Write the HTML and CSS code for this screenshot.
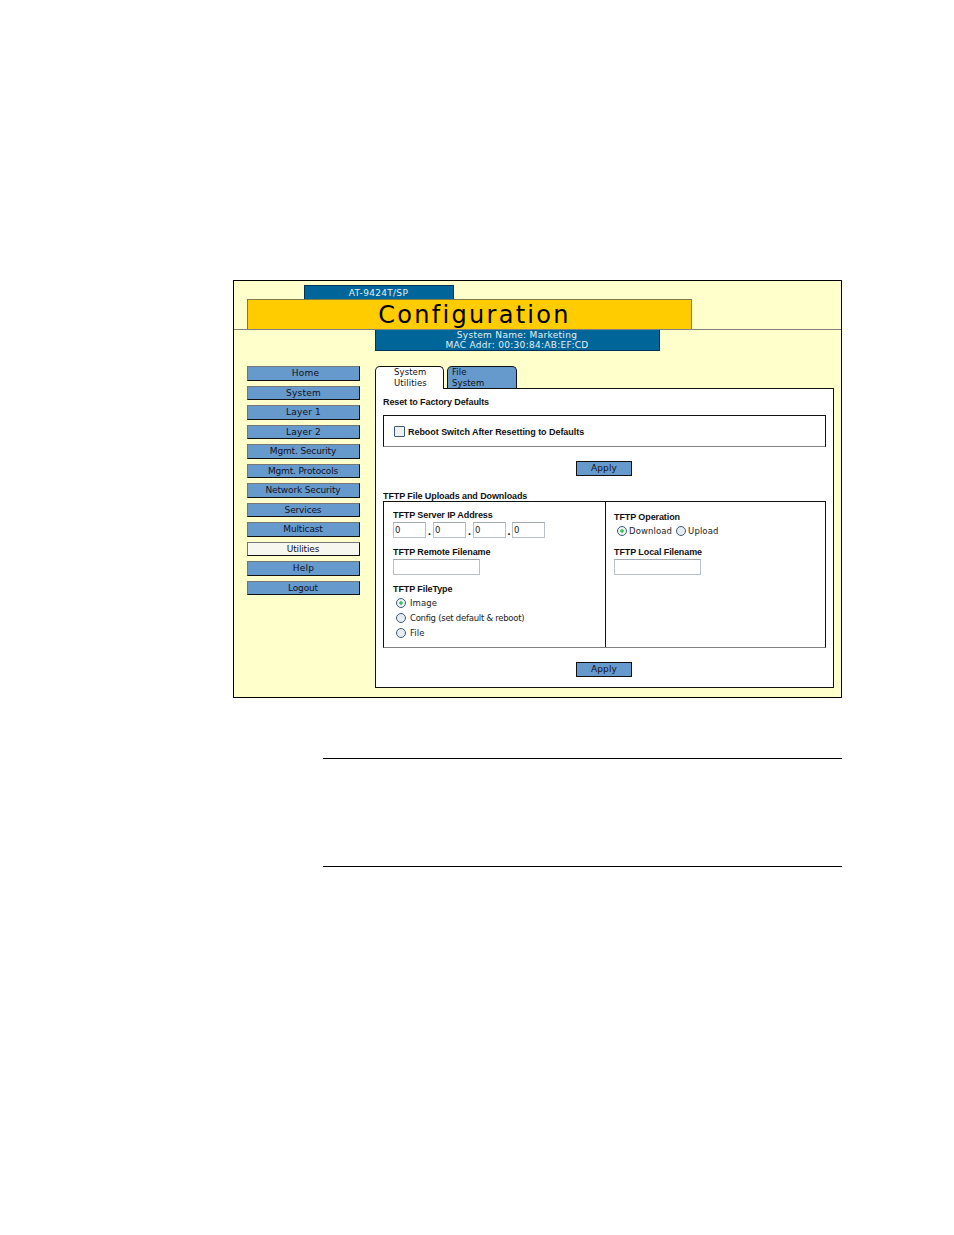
FILE: index.html
```html
<!DOCTYPE html>
<html lang="en">
<head>
<meta charset="utf-8">
<title>Configuration</title>
<link rel="stylesheet" href="styles.css">
</head>
<body>
<div class="figure">
  <div class="panel">
    <header class="head">
      <div class="model">AT-9424T/SP</div>
      <div class="title">Configuration</div>
    </header>
    <div class="sysinfo">
      <div>System Name: Marketing</div>
      <div>MAC Addr: 00:30:84:AB:EF:CD</div>
    </div>
    <div class="main">
      <nav class="side">
        <a class="nav home">Home</a>
        <a class="nav">System</a>
        <a class="nav">Layer 1</a>
        <a class="nav">Layer 2</a>
        <a class="nav long">Mgmt. Security</a>
        <a class="nav long">Mgmt. Protocols</a>
        <a class="nav long">Network Security</a>
        <a class="nav long">Services</a>
        <a class="nav long">Multicast</a>
        <a class="nav long current">Utilities</a>
        <a class="nav">Help</a>
        <a class="nav long">Logout</a>
      </nav>
      <section class="content">
        <div class="tabs">
          <div class="tab active">System<br>Utilities</div>
          <div class="tab">File<br>System</div>
        </div>
        <div class="box">
          <h2 class="sect first">Reset to Factory Defaults</h2>
          <div class="reset">
            <label class="check"><input type="checkbox">Reboot Switch After Resetting to Defaults</label>
          </div>
          <div class="actions one"><button class="apply">Apply</button></div>
          <h2 class="sect second">TFTP File Uploads and Downloads</h2>
          <div class="tftp">
            <div class="col left">
              <div class="lab l1">TFTP Server IP Address</div>
              <div class="ip">
                <input class="field ipf" value="0"><span class="dot">.</span>
                <input class="field ipf" value="0"><span class="dot">.</span>
                <input class="field ipf" value="0"><span class="dot short">.</span>
                <input class="field ipf" value="0">
              </div>
              <div class="lab l2">TFTP Remote Filename</div>
              <input class="field name">
              <div class="lab l3">TFTP FileType</div>
              <label class="opt first-opt"><input type="radio" name="ft" checked>Image</label>
              <label class="opt tight"><input type="radio" name="ft">Config (set default &amp; reboot)</label>
              <label class="opt"><input type="radio" name="ft">File</label>
            </div>
            <div class="col right">
              <div class="lab r1">TFTP Operation</div>
              <div class="ops">
                <label class="op"><input type="radio" name="op" checked>Download</label>
                <label class="op"><input type="radio" name="op">Upload</label>
              </div>
              <div class="lab r2">TFTP Local Filename</div>
              <input class="field name">
            </div>
          </div>
          <div class="actions two"><button class="apply">Apply</button></div>
        </div>
      </section>
    </div>
  </div>
  <div class="note"></div>
</div>
</body>
</html>
```
FILE: styles.css
```css
html, body { margin: 0; padding: 0; background: #fff; }
body { height: 1235px; overflow: hidden; font-family: "DejaVu Sans", sans-serif; color: #111; }
.figure { padding: 280px 0 0 233px; width: 609px; }
.panel { box-sizing: border-box; width: 609px; height: 418px; border: 1px solid #000; background: #ffffcc; }
.head { height: 44px; padding-top: 4px; border-bottom: 1px solid #808080; }
.model { box-sizing: border-box; margin-left: 70px; width: 150px; height: 14px; background: #006699; border: 1px solid #003355; border-bottom: 0; color: #e8f0f6; font-size: 9px; line-height: 14px; text-align: center; letter-spacing: .3px; padding-right: 1px; }
.title { box-sizing: border-box; margin-left: 13px; width: 445px; height: 30px; padding-left: 10px; background: #ffcc00; border: 1px solid #807a40; border-bottom: 0; font-size: 24px; line-height: 31px; text-align: center; letter-spacing: 2.3px; color: #000; font-weight: 400; }
.sysinfo { box-sizing: border-box; margin-left: 141px; width: 285px; height: 21px; background: #006699; border: 1px solid #003355; border-top: 0; color: #e8f0f6; font-size: 9px; line-height: 10px; text-align: center; letter-spacing: .3px; padding-right: 1px; }
.main { display: flex; margin-top: 15px; padding-left: 13px; }
.side { width: 113px; display: flex; flex-direction: column; }
.nav { box-sizing: border-box; display: block; height: 14.5px; margin-bottom: 5px; background: #6699cc; border: 1px solid #111; border-left-color: #707a60; border-top-color: #777; color: #112; font-size: 9px; line-height: 13px; text-align: center; letter-spacing: .2px; }
.nav.home { padding-left: 4px; }
.nav.long { letter-spacing: -.15px; padding-right: 1px; }
.nav.current { background: #f7f7f0; }
.content { margin-left: 15px; width: 459px; }
.tabs { display: flex; height: 22px; }
.tab { box-sizing: border-box; height: 22px; font-size: 8.5px; line-height: 11px; letter-spacing: .1px; border: 1px solid #111; border-bottom: 0; border-radius: 5px 5px 0 0; background: #6699cc; width: 70px; margin-left: 3px; padding-left: 4px; }
.tab.active { background: #fff; width: 69px; margin-left: 0; padding-left: 18px; position: relative; z-index: 1; height: 23px; margin-bottom: -1px; }
.box { box-sizing: border-box; width: 459px; height: 300px; border: 1px solid #111; background: #fff; padding: 0 7px; }
.sect, .lab, .check { font-family: "Liberation Sans", Arial, sans-serif; font-size: 9px; font-weight: 700; letter-spacing: -.1px; color: #111; }
.sect { margin: 0; line-height: 12px; }
.sect.first { padding-top: 7px; }
.sect.second { margin-top: 14px; }
.reset { box-sizing: border-box; margin-top: 7px; width: 443px; height: 32px; border: 1px solid #111; border-bottom-color: #808080; }
.check { display: flex; align-items: center; height: 31px; padding-left: 10px; letter-spacing: -.05px; }
.check input { appearance: none; box-sizing: border-box; width: 11px; height: 11px; margin: 0 3px 0 0; border: 1px solid #3c5a78; border-radius: 1px; background: #eef0f2; }
.actions { display: flex; padding-left: 193px; }
.actions.one { margin-top: 14px; }
.actions.two { margin-top: 14px; }
.apply { box-sizing: border-box; width: 56px; height: 15px; padding: 0; background: #6699cc; border: 1px solid #111; color: #112; font: 9px/13px "DejaVu Sans", sans-serif; letter-spacing: .1px; }
.tftp { box-sizing: border-box; display: flex; margin-top: -1px; width: 443px; height: 147px; border: 1px solid #111; border-bottom-color: #808080; }
.col { box-sizing: border-box; }
.col.left { width: 222px; border-right: 1px solid #111; padding-left: 9px; }
.col.right { flex: 1; padding-left: 8px; }
.lab { line-height: 12px; }
.l1 { margin-top: 7px; }
.l2 { margin-top: 8px; }
.l3 { margin-top: 8px; }
.r1 { margin-top: 9px; }
.r2 { margin-top: 8px; }
.ip { display: flex; align-items: flex-end; height: 16px; margin-top: 1px; }
.field { box-sizing: border-box; display: block; height: 16px; margin: 0; padding: 0 0 0 1px; border: 1px solid #b8c0c8; border-top-color: #a0a8b0; background: #fff; font: 8.5px/14px "DejaVu Sans", sans-serif; color: #222; outline: 0; }
.ipf { width: 33px; }
.dot { width: 7px; text-align: center; font-size: 9px; line-height: 11px; font-weight: 700; }
.dot.short { width: 6px; }
.name { width: 87px; margin-top: 1px; }
.opt, .op { display: flex; align-items: center; font-size: 8.5px; color: #222; letter-spacing: .1px; }
.opt { height: 14.8px; padding-left: 3px; }
.opt.tight { letter-spacing: -.26px; }
.opt input, .op input { appearance: none; box-sizing: border-box; width: 10px; height: 10px; margin: 0 4px 0 0; border: 1px solid #3c5a78; border-radius: 50%; background: #e8ecf0; }
.opt input:checked, .op input:checked { background: radial-gradient(circle, #3fc46c 0, #3fc46c 26%, #eef2f4 36%); }
.first-opt { margin-top: 1px; }
.ops { display: flex; height: 14px; align-items: center; padding-left: 3px; margin-top: 1px; gap: 4px; }
.op input { margin-right: 2px; }
.note { box-sizing: border-box; width: 519px; height: 109px; margin: 60px 0 0 90px; border-top: 1px solid #000; border-bottom: 1px solid #000; }
```
